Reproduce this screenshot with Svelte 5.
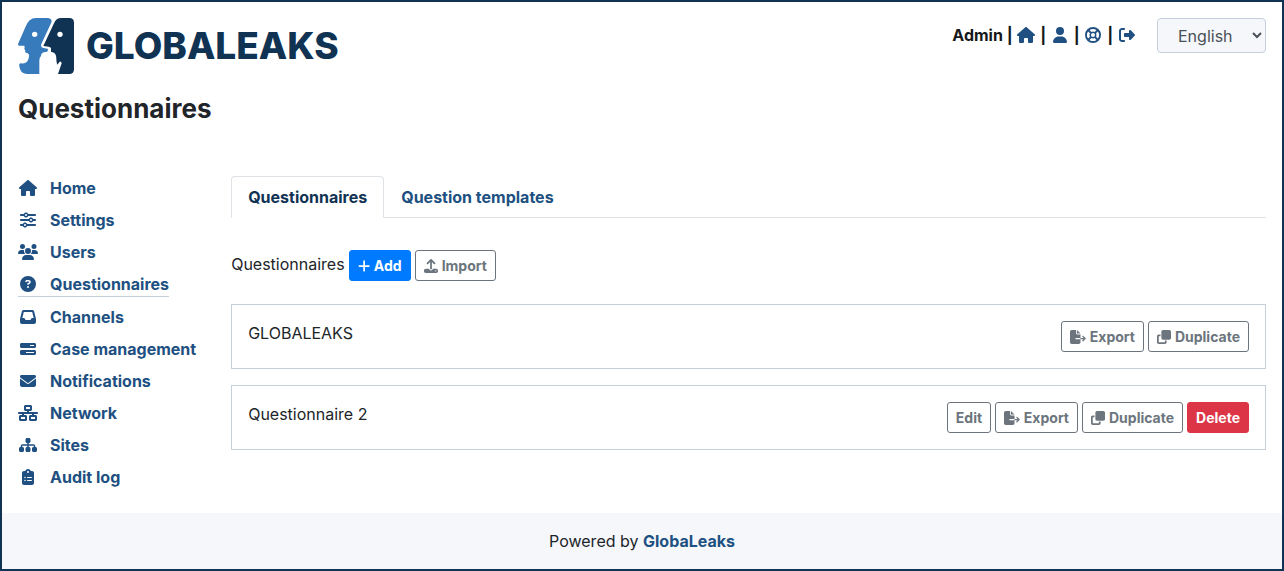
<script>
  const icons = {
    home: { w: 576, d: 'M575.8 255.5c0 18-15 32.1-32 32.1h-32l.7 160.2c0 2.7-.2 5.4-.5 8.1V472c0 22.1-17.9 40-40 40H456c-1.1 0-2.2 0-3.3-.1c-1.4 .1-2.8 .1-4.2 .1H416 392c-22.1 0-40-17.9-40-40V448 384c0-17.7-14.3-32-32-32H256c-17.7 0-32 14.3-32 32v64 24c0 22.1-17.9 40-40 40H160 128.1c-1.5 0-3-.1-4.5-.2c-1.2 .1-2.4 .2-3.6 .2H104c-22.1 0-40-17.9-40-40V360c0-.9 0-1.9 .1-2.8V287.6H32c-18 0-32-14-32-32.1c0-9 3-17 10-24L266.4 8c7-7 15-8 22-8s15 2 21 7L564.8 231.5c8 7 12 15 11 24z' },
    user: { w: 448, d: 'M224 256A128 128 0 1 0 224 0a128 128 0 1 0 0 256zm-45.7 48C79.8 304 0 383.8 0 482.3C0 498.7 13.3 512 29.7 512H418.3c16.4 0 29.7-13.3 29.7-29.7C448 383.8 368.2 304 269.7 304H178.3z' },
    support: { w: 512, d: 'M256 0a256 256 0 1 1 0 512A256 256 0 1 1 256 0zM145 99.500l58 58a112 112 0 0 1 106 0l58-58a192 192 0 0 0-222 0zM412.500 145l-58 58a112 112 0 0 1 0 106l58 58a192 192 0 0 0 0-222zM367 412.500l-58-58a112 112 0 0 1-106 0l-58 58a192 192 0 0 0 222 0zM99.500 367l58-58a112 112 0 0 1 0-106l-58-58a192 192 0 0 0 0 222zM256 192a64 64 0 1 0 0 128 64 64 0 1 0 0-128z' },
    logout: { w: 512, d: 'M377.9 105.9L500.7 228.7c7.2 7.2 11.3 17.1 11.3 27.3s-4.1 20.1-11.3 27.3L377.9 406.1c-6.4 6.4-15 9.9-24 9.9c-18.7 0-33.9-15.2-33.9-33.9l0-62.1-128 0c-17.7 0-32-14.3-32-32l0-64c0-17.7 14.3-32 32-32l128 0 0-62.1c0-18.7 15.2-33.9 33.9-33.9c9 0 17.6 3.6 24 9.9zM160 96L96 96c-17.7 0-32 14.3-32 32l0 256c0 17.7 14.3 32 32 32l64 0c17.7 0 32 14.3 32 32s-14.3 32-32 32l-64 0c-53 0-96-43-96-96L0 128C0 75 43 32 96 32l64 0c17.7 0 32 14.3 32 32s-14.3 32-32 32z' },
    sliders: { w: 512, d: 'M0 416c0 17.7 14.3 32 32 32l54.7 0c12.3 28.3 40.5 48 73.3 48s61-19.7 73.3-48L480 448c17.7 0 32-14.3 32-32s-14.3-32-32-32l-246.7 0c-12.3-28.3-40.5-48-73.3-48s-61 19.7-73.3 48L32 384c-17.7 0-32 14.3-32 32zm128 0a32 32 0 1 1 64 0 32 32 0 1 1 -64 0zM320 256a32 32 0 1 1 64 0 32 32 0 1 1 -64 0zm32-80c-32.8 0-61 19.7-73.3 48L32 224c-17.7 0-32 14.3-32 32s14.3 32 32 32l246.7 0c12.3 28.3 40.5 48 73.3 48s61-19.7 73.3-48l54.7 0c17.7 0 32-14.3 32-32s-14.3-32-32-32l-54.7 0c-12.3-28.3-40.5-48-73.3-48zM192 128a32 32 0 1 1 0-64 32 32 0 1 1 0 64zm73.3-64C253 35.7 224.8 16 192 16s-61 19.7-73.3 48L32 64C14.3 64 0 78.3 0 96s14.3 32 32 32l86.7 0c12.3 28.3 40.5 48 73.3 48s61-19.7 73.3-48L480 128c17.7 0 32-14.3 32-32s-14.3-32-32-32L265.3 64z' },
    users: { w: 640, d: 'M144 0a80 80 0 1 1 0 160A80 80 0 1 1 144 0zM512 0a80 80 0 1 1 0 160A80 80 0 1 1 512 0zM0 298.7C0 239.8 47.8 192 106.7 192h42.7c15.9 0 31 3.5 44.6 9.7c-1.3 7.2-1.9 14.7-1.9 22.3c0 38.2 16.8 72.5 43.3 96c-.2 0-.4 0-.7 0H21.3C9.6 320 0 310.4 0 298.7zM405.3 320c-.2 0-.4 0-.7 0c26.6-23.5 43.3-57.8 43.3-96c0-7.6-.7-15-1.9-22.3c13.6-6.3 28.7-9.7 44.6-9.7h42.7C592.2 192 640 239.8 640 298.7c0 11.8-9.6 21.3-21.3 21.3H405.3zM224 224a96 96 0 1 1 192 0 96 96 0 1 1 -192 0zM128 485.3C128 411.7 187.7 352 261.3 352H378.7C452.3 352 512 411.7 512 485.3c0 14.7-11.9 26.7-26.7 26.7H154.7c-14.7 0-26.7-11.9-26.7-26.7z' },
    question: { w: 512, d: 'M256 512A256 256 0 1 0 256 0a256 256 0 1 0 0 512zM169.8 165.3c7.9-22.3 29.1-37.3 52.8-37.3h58.3c34.9 0 63.1 28.3 63.1 63.1c0 22.6-12.1 43.5-31.7 54.8L280 264.4c-.2 13-10.9 23.6-24 23.6c-13.3 0-24-10.7-24-24V250.5c0-8.6 4.6-16.5 12.1-20.8l44.3-25.4c4.7-2.7 7.6-7.7 7.6-13.1c0-8.4-6.8-15.1-15.1-15.1H222.6c-3.4 0-6.4 2.1-7.5 5.3l-.4 1.2c-4.4 12.5-18.2 19-30.6 14.6s-19-18.2-14.6-30.6l.4-1.2zM224 352a32 32 0 1 1 64 0 32 32 0 1 1 -64 0z' },
    inbox: { w: 512, d: 'M121 32C91.6 32 66 52 58.9 80.5L1.9 308.4C.6 313.5 0 318.7 0 323.9V416c0 35.3 28.7 64 64 64H448c35.3 0 64-28.7 64-64V323.9c0-5.2-.6-10.4-1.9-15.5l-57-227.9C446 52 420.4 32 391 32H121zm0 64H391l48 192H387.8c-12.1 0-23.2 6.8-28.6 17.7l-14.3 28.6c-5.4 10.8-16.5 17.7-28.6 17.7H195.8c-12.1 0-23.2-6.8-28.6-17.7l-14.3-28.6c-5.4-10.8-16.5-17.7-28.6-17.7H73L121 96z' },
    progress: { w: 512, d: 'M448 160H320V128H448v32zM48 64C21.5 64 0 85.5 0 112v64c0 26.5 21.5 48 48 48H464c26.5 0 48-21.5 48-48V112c0-26.5-21.5-48-48-48H48zM448 352v32H192V352H448zM48 288c-26.5 0-48 21.5-48 48v64c0 26.5 21.5 48 48 48H464c26.5 0 48-21.5 48-48V336c0-26.5-21.5-48-48-48H48z' },
    envelope: { w: 512, d: 'M48 64C21.5 64 0 85.5 0 112c0 15.1 7.1 29.3 19.2 38.4L236.8 313.6c11.4 8.5 27 8.5 38.4 0L492.8 150.4c12.1-9.1 19.2-23.3 19.2-38.4c0-26.5-21.5-48-48-48H48zM0 176V384c0 35.3 28.7 64 64 64H448c35.3 0 64-28.7 64-64V176L294.4 339.2c-22.8 17.1-54 17.1-76.8 0L0 176z' },
    network: { w: 640, d: 'M256 64H384v64H256V64zM240 0c-26.5 0-48 21.5-48 48v96c0 26.5 21.5 48 48 48h48v32H32c-17.7 0-32 14.3-32 32s14.3 32 32 32h96v32H80c-26.5 0-48 21.5-48 48v96c0 26.5 21.5 48 48 48H240c26.5 0 48-21.5 48-48V368c0-26.5-21.5-48-48-48H192V288H448v32H400c-26.5 0-48 21.5-48 48v96c0 26.5 21.5 48 48 48H560c26.5 0 48-21.5 48-48V368c0-26.5-21.5-48-48-48H512V288h96c17.7 0 32-14.3 32-32s-14.3-32-32-32H352V192h48c26.5 0 48-21.5 48-48V48c0-26.5-21.5-48-48-48H240zM96 448V384H224v64H96zm320-64H544v64H416V384z' },
    sitemap: { w: 576, d: 'M208 80c0-26.5 21.5-48 48-48h64c26.5 0 48 21.5 48 48v64c0 26.5-21.5 48-48 48h-8v40H464c30.9 0 56 25.1 56 56v32h8c26.5 0 48 21.5 48 48v64c0 26.5-21.5 48-48 48H464c-26.5 0-48-21.5-48-48V368c0-26.5 21.5-48 48-48h8V288c0-4.4-3.6-8-8-8H312v40h8c26.5 0 48 21.5 48 48v64c0 26.5-21.5 48-48 48H256c-26.5 0-48-21.5-48-48V368c0-26.5 21.5-48 48-48h8V280H112c-4.4 0-8 3.6-8 8v32h8c26.5 0 48 21.5 48 48v64c0 26.5-21.5 48-48 48H48c-26.5 0-48-21.5-48-48V368c0-26.5 21.5-48 48-48h8V288c0-30.9 25.1-56 56-56H264V192h-8c-26.5 0-48-21.5-48-48V80z' },
    clipboard: { w: 384, d: 'M192 0c-41.8 0-77.4 26.7-90.5 64H64C28.7 64 0 92.7 0 128V448c0 35.3 28.7 64 64 64H320c35.3 0 64-28.7 64-64V128c0-35.3-28.7-64-64-64H282.5C269.4 26.7 233.8 0 192 0zm0 64a32 32 0 1 1 0 64 32 32 0 1 1 0-64zM72 272a24 24 0 1 1 48 0 24 24 0 1 1 -48 0zm104-16H304c8.8 0 16 7.2 16 16s-7.2 16-16 16H176c-8.8 0-16-7.2-16-16s7.2-16 16-16zM72 368a24 24 0 1 1 48 0 24 24 0 1 1 -48 0zm88 0c0-8.8 7.2-16 16-16H304c8.8 0 16 7.2 16 16s-7.2 16-16 16H176c-8.8 0-16-7.2-16-16z' },
    plus: { w: 448, d: 'M256 80c0-17.7-14.3-32-32-32s-32 14.3-32 32V224H48c-17.7 0-32 14.3-32 32s14.3 32 32 32H192V432c0 17.7 14.3 32 32 32s32-14.3 32-32V288H400c17.7 0 32-14.3 32-32s-14.3-32-32-32H256V80z' },
    upload: { w: 512, d: 'M288 109.3V352c0 17.7-14.3 32-32 32s-32-14.3-32-32V109.3l-73.4 73.4c-12.5 12.5-32.8 12.5-45.3 0s-12.5-32.8 0-45.3l128-128c12.5-12.5 32.8-12.5 45.3 0l128 128c12.5 12.5 12.5 32.8 0 45.3s-32.8 12.5-45.3 0L288 109.3zM64 352H192c0 35.3 28.7 64 64 64s64-28.7 64-64H448c35.3 0 64 28.7 64 64v32c0 35.3-28.7 64-64 64H64c-35.3 0-64-28.7-64-64V416c0-35.3 28.7-64 64-64zM432 456a24 24 0 1 0 0-48 24 24 0 1 0 0 48z' },
    export: { w: 576, d: 'M0 64C0 28.7 28.7 0 64 0H224V128c0 17.7 14.3 32 32 32H384V288H216c-13.3 0-24 10.7-24 24s10.7 24 24 24H384V448c0 35.3-28.7 64-64 64H64c-35.3 0-64-28.7-64-64V64zM384 336V288H494.1l-39-39c-9.4-9.4-9.4-24.6 0-33.9s24.6-9.4 33.9 0l80 80c9.4 9.4 9.4 24.6 0 33.9l-80 80c-9.4 9.4-24.6 9.4-33.9 0s-9.4-24.6 0-33.9l39-39H384zm0-208H256V0L384 128z' },
    clone: { w: 512, d: 'M288 448H64V224h64V160H64c-35.3 0-64 28.7-64 64V448c0 35.3 28.7 64 64 64H288c35.3 0 64-28.7 64-64V384H288v64zm-64-96H448c35.3 0 64-28.7 64-64V64c0-35.3-28.7-64-64-64H224c-35.3 0-64 28.7-64 64V288c0 35.3 28.7 64 64 64z' }
  };

  const menu = [
    ['home', 'Home'],
    ['sliders', 'Settings'],
    ['users', 'Users'],
    ['question', 'Questionnaires'],
    ['inbox', 'Channels'],
    ['progress', 'Case management'],
    ['envelope', 'Notifications'],
    ['network', 'Network'],
    ['sitemap', 'Sites'],
    ['clipboard', 'Audit log']
  ];

  const shortcuts = [
    ['home', 'Home'],
    ['user', 'Preferences'],
    ['support', 'Support'],
    ['logout', 'Logout']
  ];

  const questionnaires = [
    { name: 'GLOBALEAKS', editable: false },
    { name: 'Questionnaire 2', editable: true }
  ];

  let language = $state('English');
</script>

{#snippet icon(name)}
  <svg class="icon" viewBox="0 0 {icons[name].w} 512" aria-hidden="true">
    <path fill="currentColor" fill-rule="evenodd" d={icons[name].d} />
  </svg>
{/snippet}

<div class="page">
  <header>
    <a class="brand" href="#/">
      <svg class="mark" viewBox="0 0 168 168" aria-hidden="true">
        <path fill="#377bbc" d="M54 0H88Q106 2 99 16L70 78Q67 88 76 90L89 92Q92 98 86 102Q78 101 74 104Q69 106 69 114Q64 118 64 128V168H26Q6 166 4 144Q2 136 8 136Q26 138 30 126Q34 118 33 110Q30 104 24 104Q20 102 22 96Q17 94 20 90L19 83H4Q-2 82 1 76L22 28Q32 0 54 0Z" />
        <path fill="#103253" d="M130 0H154Q168 0 168 14V154Q168 168 154 168H120Q127 148 131 136Q130 129 125 131L118 140Q115 134 115 122Q115 108 108 104L99 101V91Q98 87 92 86L76 84L108 16Q114 0 130 0Z" />
        <circle cx="50" cy="49" r="8" fill="#fff" />
        <circle cx="126" cy="49" r="8" fill="#fff" />
      </svg>
      <span class="wordmark">GLOBALEAKS</span>
    </a>
    <div class="tools">
      <nav class="shortcuts" aria-label="Account">
        Admin
        {#each shortcuts as [name, label]}
          {' | '}<a class="slot" href="#/{name}" aria-label={label}>{@render icon(name)}</a>
        {/each}
      </nav>
      <select aria-label="Language" bind:value={language}>
        <option>English</option>
      </select>
    </div>
  </header>

  <h1>Questionnaires</h1>

  <div class="body">
    <nav class="side" aria-label="Administration">
      {#each menu as [name, label]}
        <a href="#/admin/{name}" class:current={label === 'Questionnaires'}>
          <span class="slot">{@render icon(name)}</span>
          {label}
        </a>
      {/each}
    </nav>

    <main>
      <div class="tabs" role="tablist">
        <a class="tab active" role="tab" aria-selected="true" href="#/list">Questionnaires</a>
        <a class="tab" role="tab" aria-selected="false" href="#/templates">Question templates</a>
      </div>

      <div class="bar">
        <span>Questionnaires</span>
        <button class="btn primary">{@render icon('plus')}Add</button>
        <button class="btn">{@render icon('upload')}Import</button>
      </div>

      <div class="list">
        {#each questionnaires as q}
          <div class="card">
            <span>{q.name}</span>
            <div class="actions">
              {#if q.editable}
                <button class="btn">Edit</button>
              {/if}
              <button class="btn">{@render icon('export')}Export</button>
              <button class="btn">{@render icon('clone')}Duplicate</button>
              {#if q.editable}
                <button class="btn danger">Delete</button>
              {/if}
            </div>
          </div>
        {/each}
      </div>
    </main>
  </div>

  <footer>Powered by <a href="#/about">GlobaLeaks</a></footer>
</div>

<style>
  .page {
    box-sizing: border-box;
    display: flex;
    flex-direction: column;
    min-height: 100vh;
    border: 2px solid #103253;
    background: #fff;
    color: #212529;
    font: 400 16px/24px Inter, sans-serif;
  }

  a {
    color: #205081;
    font-weight: 700;
    text-decoration: none;
  }

  .icon {
    display: block;
    height: 16px;
    flex: none;
  }

  header {
    display: flex;
    justify-content: space-between;
    align-items: flex-start;
    padding: 16px 16px 0;
  }

  .brand {
    display: flex;
    align-items: center;
    gap: 12px;
    color: #103253;
  }

  .mark {
    display: block;
    width: 56px;
    height: 56px;
  }

  .wordmark {
    font-size: 37px;
    font-weight: 800;
    line-height: 56px;
  }

  .tools {
    display: flex;
    align-items: flex-start;
    gap: 20px;
  }

  .shortcuts {
    padding-top: 5px;
    color: #16181b;
    font-weight: 700;
    white-space: nowrap;
  }

  .slot {
    display: inline-flex;
    justify-content: center;
    width: 20px;
  }

  .shortcuts .slot {
    vertical-align: -2px;
  }

  select {
    height: 35px;
    padding: 0 0 0 16px;
    width: 109px;
    border: 1px solid #c5d0dc;
    border-radius: 4px;
    background: #f5f7fb;
    color: #495057;
    font: 400 16px/24px Inter, sans-serif;
  }

  h1 {
    margin: 0;
    padding: 19px 16px 0;
    font-size: 26px;
    font-weight: 700;
    line-height: 32px;
  }

  .body {
    display: flex;
    gap: 35px;
    padding: 47px 16px 20px;
  }

  .side {
    display: flex;
    flex-direction: column;
    align-items: flex-start;
    gap: 8px;
    padding-top: 4px;
    flex: none;
  }

  .side a {
    display: flex;
    align-items: center;
    gap: 12px;
  }

  .side a.current {
    border-bottom: 1px solid #c5d0dc;
  }

  main {
    flex: 1;
    min-width: 0;
    padding-top: 4px;
  }

  .tabs {
    display: flex;
    border-bottom: 1px solid #dee2e6;
  }

  .tab {
    margin-bottom: -1px;
    padding: 8px 16px;
    border: 1px solid transparent;
    border-radius: 4px 4px 0 0;
  }

  .tab.active {
    border-color: #dee2e6 #dee2e6 #fff;
    background: #fff;
    color: #103253;
  }

  .bar {
    display: flex;
    align-items: flex-start;
    gap: 4px;
    padding: 32px 0 23px;
    line-height: 28px;
  }

  .btn {
    display: flex;
    align-items: center;
    gap: 4px;
    padding: 4px 8px;
    border: 1px solid #6c757d;
    border-radius: 3px;
    background: #fff;
    color: #6c757d;
    font: 700 14px/21px Inter, sans-serif;
  }

  .btn .icon {
    height: 14px;
  }

  .primary {
    border-color: #007bff;
    background: #007bff;
    color: #fff;
  }

  .danger {
    border-color: #dc3545;
    background: #dc3545;
    color: #fff;
  }

  .list {
    display: flex;
    flex-direction: column;
    gap: 16px;
  }

  .card {
    display: flex;
    justify-content: space-between;
    align-items: flex-start;
    padding: 16px;
    border: 1px solid #c5d0dc;
  }

  .actions {
    display: flex;
    gap: 4px;
  }

  footer {
    margin-top: auto;
    padding: 16px;
    background: #f5f7fb;
    text-align: center;
  }
</style>
